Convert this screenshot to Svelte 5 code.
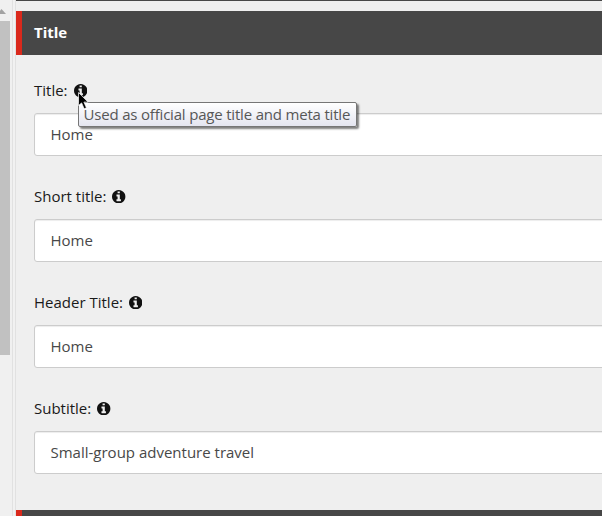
<script>
  const fields = [
    { label: 'Title:', value: 'Home', tip: 'Used as official page title and meta title' },
    { label: 'Short title:', value: 'Home' },
    { label: 'Header Title:', value: 'Home' },
    { label: 'Subtitle:', value: 'Small-group adventure travel' }
  ];
</script>

<div class="window">
  <div class="scrollbar">
    <div class="up"><svg width="10" height="6" viewBox="0 0 10 6"><path d="M-3 6L1.5 1L6 6Z" fill="#a3a3a3" /></svg></div>
    <div class="thumb"></div>
  </div>
  <div class="splitter"></div>
  <main>
    <div class="previous"></div>
    <h2>Title</h2>
    <div class="fields">
      {#each fields as field}
        <div class="field">
          <div class="label">
            <span>{field.label}</span>
            <span class="info">
              <svg class="icon" viewBox="0 0 1536 1536"><path d="M1024 1248v-160q0-14-9-23t-23-9h-96v-512q0-14-9-23t-23-9h-320q-14 0-23 9t-9 23v160q0 14 9 23t23 9h96v320h-96q-14 0-23 9t-9 23v160q0 14 9 23t23 9h448q14 0 23-9t9-23zM896 352v-160q0-14-9-23t-23-9h-192q-14 0-23 9t-9 23v160q0 14 9 23t23 9h192q14 0 23-9t9-23zM1536 768q0 209-103 385.5t-279.5 279.5t-385.5 103t-385.5-103t-279.5-279.5t-103-385.5t103-385.5t279.5-279.5t385.5-103t385.5 103t279.5 279.5t103 385.5z" fill="#111" /></svg>
              {#if field.tip}
                <span class="tooltip">{field.tip}</span>
                <svg class="cursor" width="12" height="19" viewBox="0 0 12 19"><path d="M.5 .5V13.5L3.6 10.9L6.2 16.8L8.4 15.8L5.9 10.1H10Z" fill="#000" stroke="#fff" stroke-width=".7" /></svg>
              {/if}
            </span>
          </div>
          <div class="input">{field.value}</div>
        </div>
      {/each}
    </div>
    <div class="next"></div>
  </main>
</div>

<style>
  .window {
    display: flex;
    width: 602px;
    height: 516px;
    overflow: hidden;
    background: #efefef;
    font: 15px/20px "Open Sans", sans-serif;
    color: #1a1a1a;
  }
  .scrollbar {
    width: 12px;
    flex: none;
    background: #f0f0f0;
  }
  .up {
    height: 13px;
    padding-top: 8px;
    line-height: 0;
  }
  .thumb {
    width: 10px;
    height: 334px;
    background: #c1c1c1;
  }
  .splitter {
    width: 2px;
    flex: none;
    border: solid #e1e1e1;
    border-width: 0 1px;
    background: #f1f1f1;
  }
  main {
    flex: 1;
    min-width: 0;
  }
  .previous {
    height: 1px;
    background: #474747;
    margin-bottom: 10px;
  }
  h2 {
    box-sizing: border-box;
    height: 44px;
    margin: 0;
    padding-left: 12px;
    border-left: 6px solid #da291c;
    background: #474747;
    color: #fff;
    font-size: 15px;
    line-height: 43px;
    font-weight: 700;
  }
  .fields {
    padding: 25px 0 0 18px;
    height: 430px;
    box-sizing: border-box;
  }
  .field {
    height: 106px;
  }
  .label {
    display: flex;
    gap: 6px;
    height: 33px;
  }
  .info {
    position: relative;
    width: 13px;
    height: 13px;
    margin-top: 4px;
  }
  .icon {
    display: block;
    width: 13.4px;
    height: 13.4px;
  }
  .input {
    box-sizing: border-box;
    height: 43px;
    width: 640px;
    padding-left: 15.5px;
    border: 1px solid #ccc;
    border-radius: 3px;
    background: #fff;
    box-shadow: inset 0 1px 1px rgba(0, 0, 0, .075);
    line-height: 41px;
    color: #484848;
  }
  .tooltip {
    position: absolute;
    z-index: 1;
    left: 4px;
    top: 18px;
    box-sizing: border-box;
    width: 279px;
    height: 25px;
    padding-left: 5px;
    border: 1px solid #767676;
    border-radius: 2px;
    background: linear-gradient(#fff, #e4e5f0);
    box-shadow: 2px 2px 2px rgba(0, 0, 0, .5);
    color: #575757;
    letter-spacing: -.19px;
    line-height: 23px;
    white-space: nowrap;
  }
  .cursor {
    position: absolute;
    z-index: 2;
    left: 4px;
    top: 8px;
  }
  .next {
    height: 44px;
    margin-top: 25px;
    border-left: 6px solid #da291c;
    background: #474747;
  }
</style>
